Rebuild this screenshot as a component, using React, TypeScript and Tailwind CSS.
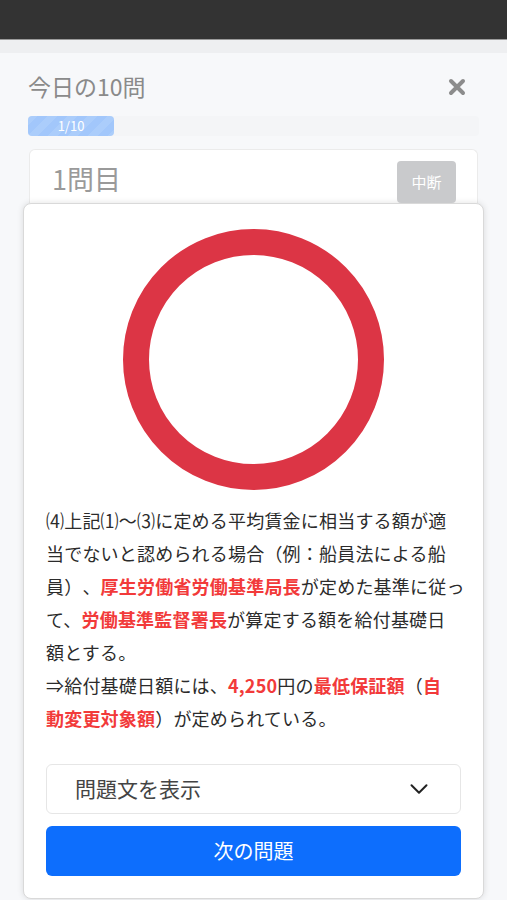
import { ChevronDown } from "lucide-react";

const font = { fontFamily: '"Noto Sans CJK JP", "Noto Sans", sans-serif' };

function Em({ children }: { children: React.ReactNode }) {
    return <span className="font-bold text-[#f23a3a]">{children}</span>;
}

function Line({ children }: { children: React.ReactNode }) {
    return <div className="whitespace-nowrap">{children}</div>;
}

export default function App() {
    return (
        <div className="min-h-[900px] bg-[#f7f8fa] overflow-hidden [text-spacing-trim:space-all]" style={font}>
            <div className="h-[40px] bg-[#333333] border-b border-[#9a9a9a]" />
            <div className="h-[13px] bg-[#eeeff1]" />

            <div className="px-[28px]">
                <div className="flex items-center justify-between h-[46px] mt-[12px]">
                    <h1 className="text-[23px] text-[#8a8a8a] -mt-[4px]">今日の10問</h1>
                    <svg width="20" height="20" viewBox="0 0 20 20" className="mr-[12px] -mt-[2px]">
                        <path d="M4 4 L16 16 M16 4 L4 16" stroke="#8c8c8c" strokeWidth="4" strokeLinecap="round" />
                    </svg>
                </div>

                <div className="mt-[5px] h-[20px] rounded bg-[#f4f5f7]">
                    <div
                        className="h-[20px] w-[86px] rounded flex items-center justify-center text-[13px] text-white bg-[#a2c7fb]"
                        style={{ backgroundImage: "linear-gradient(135deg, rgba(255,255,255,.1) 25%, transparent 25%, transparent 50%, rgba(255,255,255,.1) 50%, rgba(255,255,255,.1) 75%, transparent 75%, transparent)", backgroundSize: "20px 20px" }}
                    >
                        1/10
                    </div>
                </div>

                <div className="mt-[13px] mx-[1px] h-[54px] bg-white border border-b-0 border-[#ebebeb] rounded-t-md flex items-start justify-between pl-[22px] pr-[21px] pt-[11px]">
                    <span className="text-[27px] text-[#9a9a9a] leading-[40px] -mt-[2px]">1問目</span>
                    <span className="h-[42px] w-[59px] rounded bg-[#c9cacc] text-white text-[15px] flex items-center justify-center">中断</span>
                </div>
            </div>

            <div className="mx-[23px] h-[696px] bg-white border border-[#d9d9d9] rounded-lg shadow-[0_0_6px_rgba(0,0,0,0.12)] px-[22px] pt-[25px] flex flex-col">
                <div className="flex justify-center">
                    <div className="w-[261px] h-[261px] rounded-full border-[26px] border-[#dc3545]" />
                </div>

                <div className="mt-[14px] text-[18px] leading-[33px] text-[#2b2b2b] tracking-[0.2px]">
                    <Line>⑷上記⑴〜⑶に定める平均賃金に相当する額が適</Line>
                    <Line>当でないと認められる場合（例：船員法による船</Line>
                    <Line>員）、<Em>厚生労働省労働基準局長</Em>が定めた基準に従っ</Line>
                    <Line>て、<Em>労働基準監督署長</Em>が算定する額を給付基礎日</Line>
                    <Line>額とする。</Line>
                    <Line>⇒給付基礎日額には、<Em>4,250</Em>円の<Em>最低保証額</Em>（<Em>自</Em></Line>
                    <Line><Em>動変更対象額</Em>）が定められている。</Line>
                </div>

                <div className="mt-[29px] h-[50px] border border-[#e6e6e6] rounded-md flex items-center justify-between pl-[28px] pr-[26px]">
                    <span className="text-[21px] text-[#444]">問題文を表示</span>
                    <ChevronDown size={30} strokeWidth={1.6} className="text-[#222]" />
                </div>

                <button className="mt-[12px] h-[50px] w-full rounded-md bg-[#0d6efd] text-white text-[20px]">次の問題</button>
            </div>
        </div>
    );
}
